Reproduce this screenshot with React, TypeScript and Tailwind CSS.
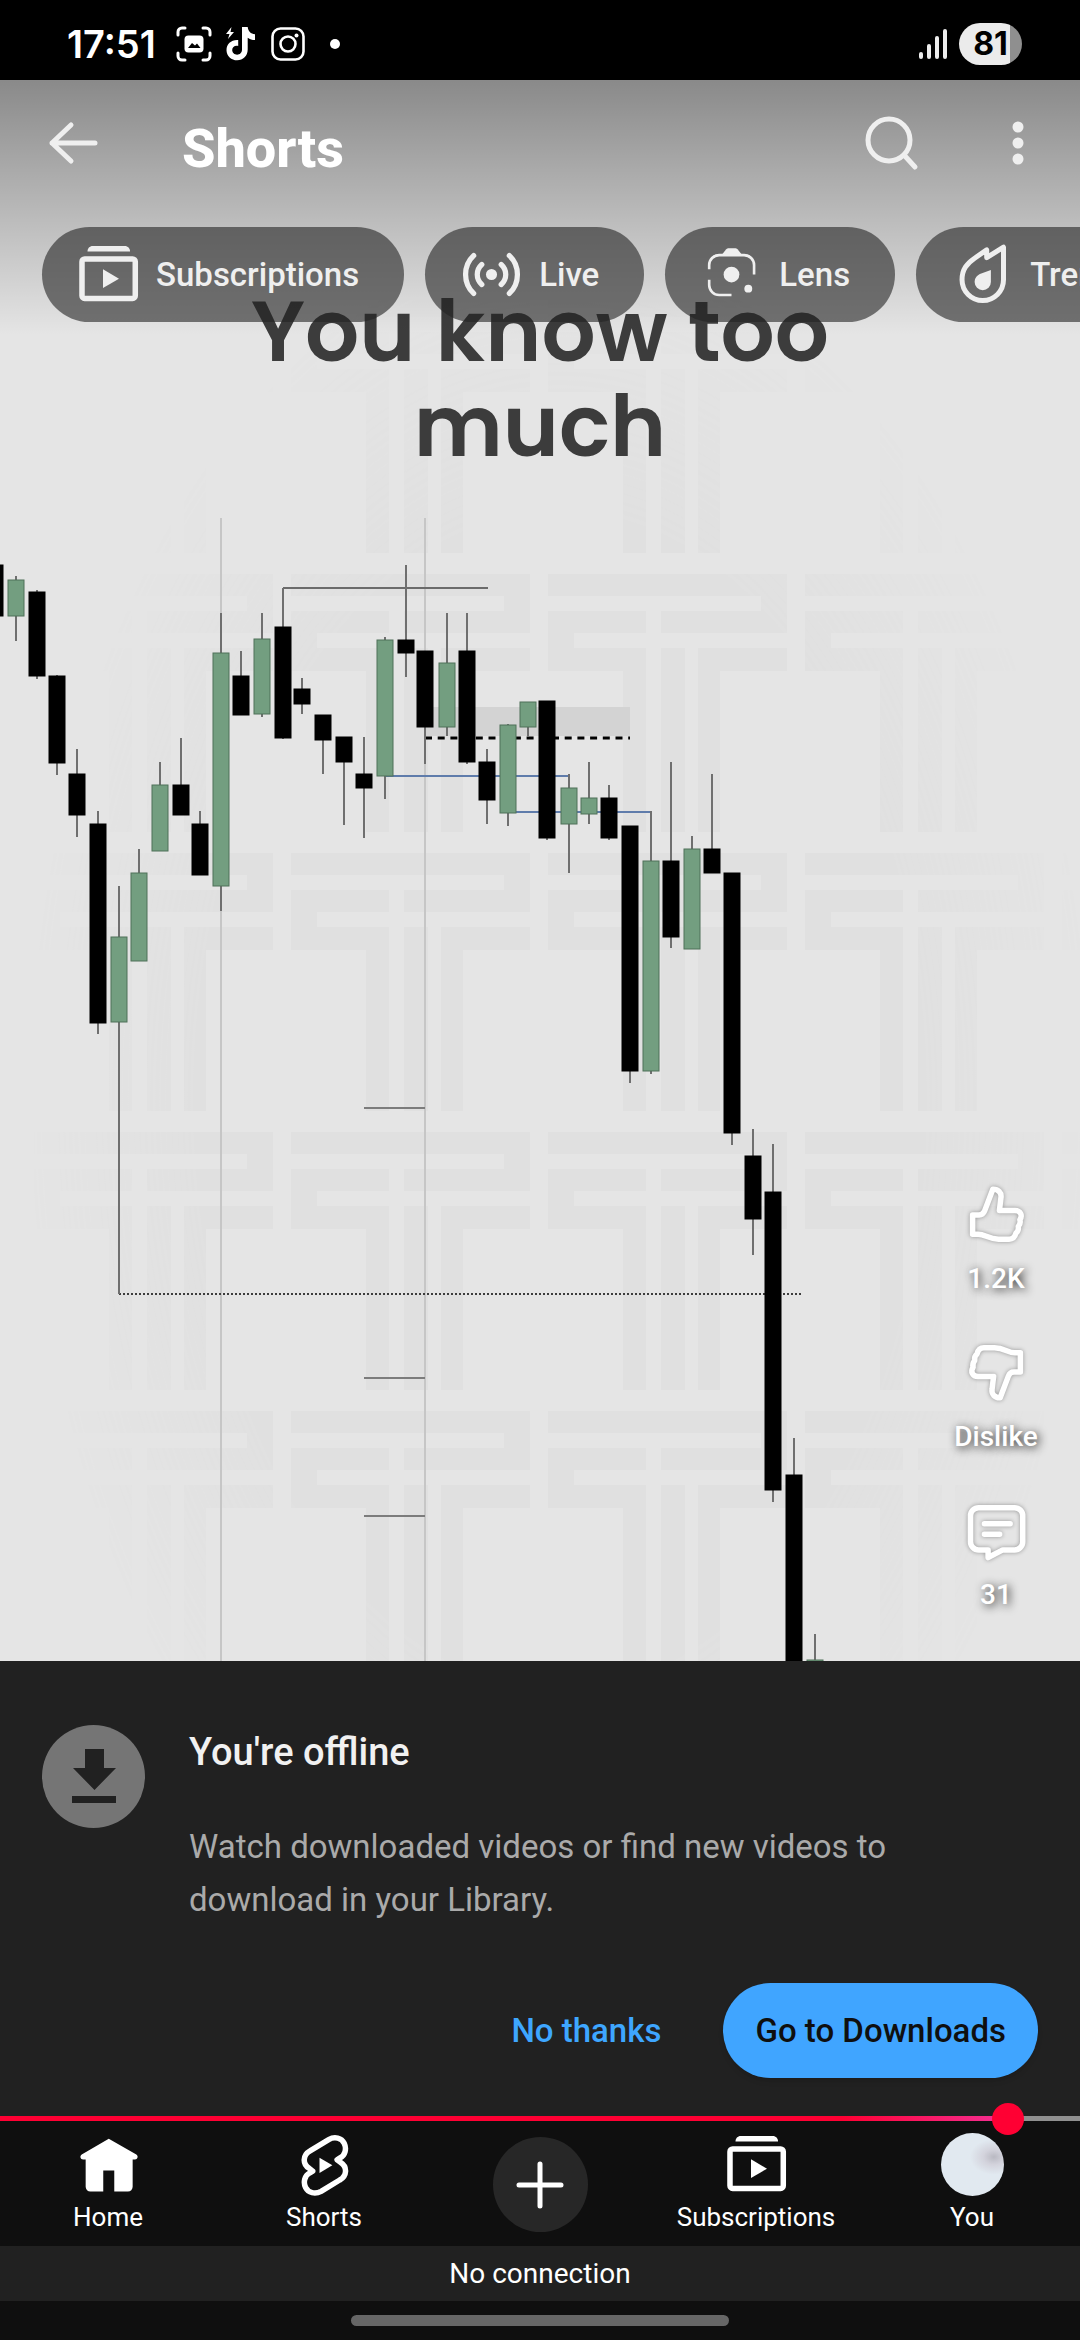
import type { ReactNode } from "react";

interface ICandle {
    x: number;
    high: number;
    top: number;
    bottom: number;
    low: number;
    up?: boolean;
}

interface IIconProps {
    className?: string;
}

// prices are already in chart units, one unit is one px of a 1080 wide video
const candles: ICandle[] = [
    { x: -5, high: 565, top: 565, bottom: 616, low: 616 },
    { x: 16, high: 576, top: 580, bottom: 616, low: 641, up: true },
    { x: 37, high: 590, top: 592, bottom: 676, low: 679 },
    { x: 57, high: 675, top: 676, bottom: 763, low: 775 },
    { x: 77, high: 749, top: 774, bottom: 815, low: 837 },
    { x: 98, high: 811, top: 824, bottom: 1023, low: 1034 },
    { x: 119, high: 886, top: 937, bottom: 1022, low: 1294, up: true },
    { x: 139, high: 849, top: 873, bottom: 961, low: 961, up: true },
    { x: 160, high: 762, top: 785, bottom: 851, low: 851, up: true },
    { x: 181, high: 738, top: 785, bottom: 815, low: 815 },
    { x: 200, high: 811, top: 824, bottom: 875, low: 875 },
    { x: 221, high: 613, top: 653, bottom: 886, low: 911, up: true },
    { x: 241, high: 651, top: 676, bottom: 715, low: 715 },
    { x: 262, high: 613, top: 639, bottom: 714, low: 717, up: true },
    { x: 283, high: 588, top: 627, bottom: 738, low: 739 },
    { x: 302, high: 678, top: 689, bottom: 704, low: 714 },
    { x: 323, high: 715, top: 715, bottom: 740, low: 774 },
    { x: 344, high: 737, top: 737, bottom: 762, low: 825 },
    { x: 364, high: 737, top: 774, bottom: 788, low: 838 },
    { x: 385, high: 637, top: 640, bottom: 776, low: 799, up: true },
    { x: 406, high: 565, top: 640, bottom: 653, low: 677 },
    { x: 425, high: 651, top: 651, bottom: 727, low: 764 },
    { x: 447, high: 613, top: 663, bottom: 727, low: 736, up: true },
    { x: 467, high: 613, top: 651, bottom: 762, low: 764 },
    { x: 487, high: 749, top: 762, bottom: 800, low: 824 },
    { x: 508, high: 724, top: 725, bottom: 813, low: 826, up: true },
    { x: 528, high: 702, top: 702, bottom: 727, low: 736, up: true },
    { x: 547, high: 701, top: 701, bottom: 838, low: 840 },
    { x: 569, high: 774, top: 788, bottom: 824, low: 873, up: true },
    { x: 589, high: 762, top: 798, bottom: 814, low: 824, up: true },
    { x: 609, high: 785, top: 798, bottom: 838, low: 840 },
    { x: 630, high: 826, top: 826, bottom: 1071, low: 1083 },
    { x: 651, high: 811, top: 861, bottom: 1071, low: 1074, up: true },
    { x: 671, high: 762, top: 861, bottom: 937, low: 948 },
    { x: 692, high: 836, top: 849, bottom: 949, low: 949, up: true },
    { x: 712, high: 774, top: 849, bottom: 873, low: 873 },
    { x: 732, high: 873, top: 873, bottom: 1133, low: 1145 },
    { x: 753, high: 1129, top: 1156, bottom: 1219, low: 1255 },
    { x: 773, high: 1144, top: 1192, bottom: 1490, low: 1502 },
    { x: 794, high: 1438, top: 1475, bottom: 1670, low: 1670 },
    { x: 815, high: 1634, top: 1660, bottom: 1690, low: 1690, up: true },
];

const Chart = () => {
    return (
        <svg
            className="absolute inset-0 h-full w-full"
            viewBox="0 80 1080 1581"
            preserveAspectRatio="xMidYMin slice"
            aria-hidden="true"
        >
            <defs>
                <pattern
                    id="watermark"
                    x="291"
                    y="574"
                    width="257"
                    height="279"
                    patternUnits="userSpaceOnUse"
                >
                    <path
                        fill="#e0e0e0"
                        d="M0 0H239V59H113V37H213V22H0zM0 37H98V59H26V74H98V258H75V97H0zM113 74H137V258H113zM150 74H239V97H172V258H150z"
                    />
                </pattern>
                <radialGradient id="fade" cx="0.5" cy="0.5" r="0.5">
                    <stop offset="0.65" stopColor="#fff" />
                    <stop offset="0.95" stopColor="#000" />
                </radialGradient>
                <mask id="fadeMask">
                    <ellipse cx="560" cy="1100" rx="560" ry="900" fill="url(#fade)" />
                </mask>
            </defs>

            <rect y="80" width="1080" height="1581" fill="#e5e5e5" />
            <rect
                y="300"
                width="1080"
                height="1361"
                fill="url(#watermark)"
                mask="url(#fadeMask)"
            />

            <path d="M221 518V1661M425 518V1661" stroke="#c6c6c6" strokeWidth="2" />
            <rect x="425" y="707" width="205" height="29" fill="#d3d3d3" />
            <path d="M283 588H488" stroke="#6b6b6b" strokeWidth="2" />
            <path
                d="M425 738H630"
                stroke="#000"
                strokeWidth="3"
                strokeDasharray="7 5.7"
            />
            <path
                d="M385 776H569M508 812H651"
                stroke="#5f7cab"
                strokeWidth="2"
            />
            <path
                d="M364 1108H425M364 1378H425M364 1516H425"
                stroke="#7c7c7c"
                strokeWidth="2"
            />
            <path
                d="M119 1294H801"
                stroke="#3d3d3d"
                strokeWidth="2"
                strokeDasharray="2 2"
            />

            {candles.map((candle) => (
                <g key={candle.x}>
                    <path
                        d={`M${candle.x} ${candle.high}V${candle.low}`}
                        stroke="#6f6f6f"
                        strokeWidth="2"
                    />
                    <rect
                        x={candle.x - 8}
                        y={candle.top}
                        width="16"
                        height={candle.bottom - candle.top}
                        fill={candle.up ? "#739e80" : "#000"}
                        stroke={candle.up ? "#4f7059" : "#000"}
                    />
                </g>
            ))}
        </svg>
    );
};

const SubscriptionsIcon = ({ className }: IIconProps) => (
    <svg className={className} viewBox="0 0 24 24" fill="currentColor" aria-hidden="true">
        <path d="M4 3.2C4 2 4.8 1.1 6 1.1h12.2c1.2 0 2 .9 2 2.1z" />
        <rect x="1.9" y="6.1" width="20.3" height="15" rx="1" fill="none" stroke="currentColor" strokeWidth="2.1" />
        <path d="M9.9 10v7.1l6.1-3.5z" />
    </svg>
);

const LiveIcon = ({ className }: IIconProps) => (
    <svg className={className} viewBox="0 0 24 24" fill="none" stroke="currentColor" strokeWidth="2" strokeLinecap="round" aria-hidden="true">
        <circle cx="12" cy="12" r="2.1" fill="currentColor" stroke="none" />
        <path d="M5.2 4.8C1.1 8.6 1.1 15.4 5.2 19.2M18.8 4.8c4.1 3.8 4.1 10.6 0 14.4M8.3 8.2c-2.3 2.1-2.3 5.5 0 7.6M15.7 8.2c2.3 2.1 2.3 5.5 0 7.6" />
    </svg>
);

const LensIcon = ({ className }: IIconProps) => (
    <svg className={className} viewBox="0 0 24 24" fill="currentColor" aria-hidden="true">
        <path
            d="M3.5 10V8.4a3.8 3.8 0 0 1 3.8-3.8h9.5a3.8 3.8 0 0 1 3.8 3.8V12M3.5 14v2a3.8 3.8 0 0 0 3.8 3.8H12"
            fill="none"
            stroke="currentColor"
        />
        <path d="M8 4.9 10 2.4c.3-.3.6-.4 1-.4h2.3c.4 0 .7.1 1 .4l2 2.5z" />
        <circle cx="12" cy="12" r="3" />
        <circle cx="18.4" cy="17.4" r="1.5" />
    </svg>
);

const TrendingIcon = ({ className }: IIconProps) => (
    <svg className={className} viewBox="0 0 24 24" fill="none" stroke="currentColor" strokeWidth="1.9" strokeLinejoin="round" aria-hidden="true">
        <path d="M20 1.6V14a7.9 7.9 0 0 1-15.8 0C4.2 10 6 7.9 9 5.8l4.6-3.2v3z" />
        <path d="M15.2 10.3v4.6a3.1 3.1 0 1 1-6.2 0c0-1.6.8-2.4 2-3.1z" fill="currentColor" stroke="none" />
    </svg>
);

const ThumbIcon = ({ className }: IIconProps) => (
    <svg className={className} viewBox="0 0 24 24" fill="none" stroke="currentColor" strokeWidth="2.1" strokeLinejoin="round" aria-hidden="true">
        <path d="M2.9 12.2h2.5c1.1 0 1.7-.6 2.1-1.6l3.1-8.2c2-.1 3.4 1.3 3.1 3.2l-.6 4.9H19c2.2 0 3 1.9 1.9 3.5.4 1.3-.1 2-.6 2.6.2 1.2-.3 2-.9 2.5-.4 1.6-1.4 2.3-2.6 2.3h-4c-3.8 0-5.2-1.9-7.8-1.9H2.9z" />
    </svg>
);

const CommentIcon = ({ className }: IIconProps) => (
    <svg className={className} viewBox="0 0 24 24" fill="none" stroke="currentColor" strokeWidth="2.1" strokeLinecap="round" strokeLinejoin="round" aria-hidden="true">
        <path d="M5.2 3.3h13.7a3.1 3.1 0 0 1 3.1 3.1v9.9a3.1 3.1 0 0 1-3.1 3.1h-4.5l-5.6 2.9v-2.9H5.2a3.1 3.1 0 0 1-3.1-3.1V6.4a3.1 3.1 0 0 1 3.1-3.1z" />
        <path d="M7.4 9.4h9.8M7.4 13.4h5.8" />
    </svg>
);

const HomeIcon = ({ className }: IIconProps) => (
    <svg className={className} viewBox="0 0 24 24" fill="currentColor" aria-hidden="true">
        <path d="M12.1 2.2 22.6 8.2c.9.6.5 1.9-.5 1.9h-.9v10.4a1.8 1.8 0 0 1-1.8 1.8h-5.2v-8H10v8H5.1a1.8 1.8 0 0 1-1.8-1.8V10.1h-1c-1 0-1.4-1.3-.5-1.9z" />
    </svg>
);

const ShortsIcon = ({ className }: IIconProps) => (
    <svg className={className} viewBox="0 0 24 24" fill="none" stroke="currentColor" strokeWidth="2.1" strokeLinejoin="round" aria-hidden="true">
        <path d="M7.5 14.5 6.2 13.5C3.5 11.8 3.7 8.4 6.5 6.8L13.6 2.5C15.9 1.2 18.5 1.9 19.5 3.9C20.5 6 19.9 8.5 17.9 9.5L16.8 10.2L18.1 11.2C20.8 12.9 20.6 16.3 17.8 17.9L10.7 22.2C8.4 23.5 5.8 22.8 4.8 20.8C3.8 18.7 4.4 16.2 6.4 15.2z" />
        <path d="M10.1 9.4v5.8l4.9-2.9z" fill="currentColor" stroke="none" />
    </svg>
);

const StatusBar = () => {
    return (
        <div className="flex h-20 items-center justify-between bg-black pt-2 pr-[58px] pl-[67px] font-['Inter',sans-serif] text-white">
            <div className="flex items-center">
                <span className="w-[109px] text-[38px] leading-[48px] font-semibold">17:51</span>
                <svg className="h-9 w-9" viewBox="0 0 36 36" fill="none" stroke="currentColor" strokeWidth="3" strokeLinecap="round" aria-hidden="true">
                    <path d="M2 9V6a4 4 0 0 1 4-4h3M27 2h3a4 4 0 0 1 4 4v3M34 27v3a4 4 0 0 1-4 4h-3M9 34H6a4 4 0 0 1-4-4v-3" />
                    <rect x="8.5" y="9.5" width="19" height="17" rx="4" fill="currentColor" stroke="none" />
                    <path d="m12 22 4-5 3 2.5 2-2 3.5 4.5z" fill="#000" stroke="none" />
                </svg>
                <svg className="ml-3 h-9 w-9" viewBox="0 0 36 36" fill="currentColor" aria-hidden="true">
                    <path d="M18 1h5.7c.4 4.2 3 6.9 7.3 7.3V14c-2.8 0-5.2-.8-7.3-2.3v11.8c0 6.6-4.7 10.8-10.5 10.8S2.5 30 2.5 24.2c0-6.5 5.1-10.8 11.7-10.2v5.9c-3.4-.8-6 1.2-6 4.1 0 2.7 2.2 4.7 4.9 4.7s4.9-2 4.9-5.2z" />
                    <path d="M7.5 1 2 8h3.5L4 13l6-7H6.5z" />
                </svg>
                <svg className="ml-2.5 h-9 w-9" viewBox="0 0 36 36" fill="none" stroke="currentColor" strokeWidth="2.6" aria-hidden="true">
                    <rect x="2.5" y="2.5" width="31" height="31" rx="8" />
                    <circle cx="18" cy="18" r="7.5" />
                    <circle cx="26.5" cy="9.5" r="2" fill="currentColor" stroke="none" />
                </svg>
                <span className="ml-6 h-2.5 w-2.5 rounded-full bg-white" />
            </div>
            <div className="flex items-center gap-3">
                <svg className="h-[30px] w-7" viewBox="0 0 28 30" stroke="#ededed" strokeWidth="4" strokeLinecap="round" aria-hidden="true">
                    <path d="M2 25v3M10 17v11M18 9v19M26 2v26" />
                </svg>
                <div className="flex h-[42px] w-[63px] items-center justify-center rounded-full bg-linear-to-r from-[#ebebeb] from-81% to-[#8f8f8f] to-81% text-[32px] leading-none font-bold text-black">
                    81
                </div>
            </div>
        </div>
    );
};

const chips = [
    { label: "Subscriptions", Icon: SubscriptionsIcon },
    { label: "Live", Icon: LiveIcon },
    { label: "Lens", Icon: LensIcon },
    { label: "Trending", Icon: TrendingIcon },
];

const Header = () => {
    return (
        <header className="relative z-10 h-[255px] bg-linear-to-b from-black/40 to-transparent text-[#efefef]">
            <div className="flex h-[147px] items-start px-[42px] pt-8">
                <button type="button" aria-label="Back" className="h-[63px] w-[63px]">
                    <svg className="h-[63px] w-[63px]" viewBox="0 0 63 63" fill="none" stroke="currentColor" strokeWidth="5" strokeLinecap="round" strokeLinejoin="round" aria-hidden="true">
                        <path d="M53 31H10M29 13 10 31l19 18" />
                    </svg>
                </button>
                <h1 className="ml-[77px] text-[54px] leading-[74px] font-extrabold text-white">Shorts</h1>
                <button type="button" aria-label="Search" className="ml-auto h-[63px] w-[63px]">
                    <svg className="h-[63px] w-[63px]" viewBox="0 0 63 63" fill="none" stroke="currentColor" strokeWidth="5" strokeLinecap="round" aria-hidden="true">
                        <circle cx="29" cy="28" r="21" />
                        <path d="m44 43 11 12" />
                    </svg>
                </button>
                <button type="button" aria-label="More options" className="ml-[63px] -mr-[11px] h-[63px] w-[63px]">
                    <svg className="h-[63px] w-[63px]" viewBox="0 0 63 63" fill="currentColor" aria-hidden="true">
                        <circle cx="32" cy="15" r="5.5" />
                        <circle cx="32" cy="31" r="5.5" />
                        <circle cx="32" cy="47" r="5.5" />
                    </svg>
                </button>
            </div>
            <nav className="flex gap-[21px] overflow-hidden pl-[42px]">
                {chips.map(({ label, Icon }) => (
                    <button
                        key={label}
                        type="button"
                        className="flex h-[95px] shrink-0 items-center gap-4 rounded-full bg-[#232323]/60 pr-[45px] pl-[35px] text-[33px] font-medium"
                    >
                        <Icon className="h-[63px] w-[63px]" />
                        {label}
                    </button>
                ))}
            </nav>
        </header>
    );
};

const ActionButton = ({ label, children }: { label: string; children: ReactNode }) => {
    return (
        <button type="button" className="flex flex-col items-center gap-4 text-[28px] leading-[34px] font-medium text-white">
            {children}
            <span className="[text-shadow:2px_2px_10px_rgba(0,0,0,0.9)]">{label}</span>
        </button>
    );
};

const Video = () => {
    return (
        <main className="relative flex flex-1 flex-col overflow-hidden bg-[#e5e5e5]">
            <Chart />
            <Header />
            <p className="relative -mt-[51px] px-[200px] text-center font-['Poppins','Inter',sans-serif] text-[85px] leading-[95px] font-semibold text-[#3c3c3c]">
                You know too much
            </p>
            <div className="relative mt-auto flex w-[168px] flex-col gap-[45px] self-end pb-[49px]">
                <ActionButton label="1.2K">
                    <ThumbIcon className="h-[63px] w-[63px] drop-shadow-[0_0_2px_rgba(0,0,0,0.35)]" />
                </ActionButton>
                <ActionButton label="Dislike">
                    <ThumbIcon className="h-[63px] w-[63px] rotate-180 drop-shadow-[0_0_2px_rgba(0,0,0,0.35)]" />
                </ActionButton>
                <ActionButton label="31">
                    <CommentIcon className="h-[63px] w-[63px] drop-shadow-[0_0_2px_rgba(0,0,0,0.35)]" />
                </ActionButton>
            </div>
        </main>
    );
};

const OfflineSheet = () => {
    return (
        <section className="bg-[#212121] px-[42px] pt-16 pb-[38px]">
            <div className="flex items-start gap-11">
                <svg className="h-[103px] w-[103px] shrink-0" viewBox="0 0 103 103" aria-hidden="true">
                    <circle cx="51.5" cy="51.5" r="51.5" fill="#757575" />
                    <path d="M43 24h19v19h12L52.5 65 31 43h12zM30 71h44v7H30z" fill="#212121" />
                </svg>
                <div>
                    <h2 className="text-[38px] leading-[54px] font-medium text-[#f1f1f1]">You're offline</h2>
                    <p className="mt-[41px] max-w-[760px] text-[33px] leading-[53px] text-[#aaaaaa]">
                        Watch downloaded videos or find new videos to download in your Library.
                    </p>
                </div>
            </div>
            <div className="mt-[57px] flex items-center justify-end gap-[62px] text-[33px] font-medium">
                <button type="button" className="h-[95px] text-[#3ea6ff]">
                    No thanks
                </button>
                <button type="button" className="h-[95px] rounded-full bg-[#40a5ff] px-8 text-[#0f0f0f] shadow-md">
                    Go to Downloads
                </button>
            </div>
        </section>
    );
};

const SeekBar = () => {
    return (
        <input
            type="range"
            aria-label="Video progress"
            min={0}
            max={1000}
            defaultValue={947}
            className="relative z-10 block h-[5px] w-full appearance-none bg-[linear-gradient(90deg,#ff0033_0%,#ff0033_78%,#f52d8e_92%,#f52d8e_93%,#909090_93%)] [&::-webkit-slider-thumb]:h-8 [&::-webkit-slider-thumb]:w-8 [&::-webkit-slider-thumb]:appearance-none [&::-webkit-slider-thumb]:rounded-full [&::-webkit-slider-thumb]:bg-[#ff0033]"
        />
    );
};

const NavLink = ({ label, children }: { label: string; children: ReactNode }) => {
    return (
        <a href="#" className="flex flex-col items-center gap-[5px] text-[26px] leading-8">
            {children}
            {label}
        </a>
    );
};

const BottomNav = () => {
    return (
        <nav className="grid grid-cols-5 bg-[#0f0f0f] pt-3 pb-[13px] text-white">
            <NavLink label="Home">
                <HomeIcon className="h-[63px] w-[63px]" />
            </NavLink>
            <NavLink label="Shorts">
                <ShortsIcon className="h-[63px] w-[63px]" />
            </NavLink>
            <button
                type="button"
                aria-label="Create"
                className="mt-1 flex h-[95px] w-[95px] items-center justify-center justify-self-center rounded-full bg-[#272727]"
            >
                <svg className="h-12 w-12" viewBox="0 0 48 48" stroke="currentColor" strokeWidth="5" strokeLinecap="round" aria-hidden="true">
                    <path d="M24 3v42M3 24h42" />
                </svg>
            </button>
            <NavLink label="Subscriptions">
                <SubscriptionsIcon className="h-[63px] w-[63px]" />
            </NavLink>
            <NavLink label="You">
                <span className="h-[63px] w-[63px] rounded-full bg-[#e1e9f0] bg-[radial-gradient(ellipse_at_84%_38%,#b9b9c2_0%,#d3d3dc_14%,#e1e9f0_32%)]" />
            </NavLink>
        </nav>
    );
};

const App = () => {
    return (
        <div className="flex min-h-screen flex-col bg-[#0f0f0f] font-['Roboto',sans-serif]">
            <StatusBar />
            <Video />
            <OfflineSheet />
            <SeekBar />
            <BottomNav />
            <p className="bg-[#212121] text-center text-[28px] leading-[55px] text-white">No connection</p>
            <div className="flex h-[39px] justify-center pt-3.5">
                <span className="h-[11px] w-[35%] rounded-full bg-[#666666]" />
            </div>
        </div>
    );
};

export default App;
